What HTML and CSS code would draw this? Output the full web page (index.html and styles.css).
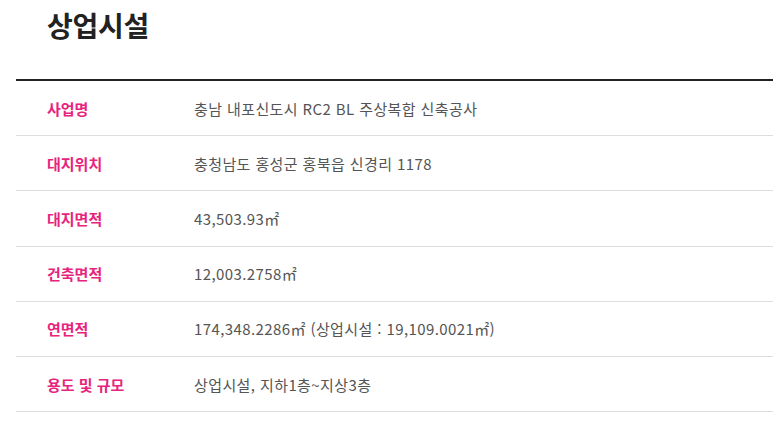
FILE: index.html
```html
<!DOCTYPE HTML>
<html lang="ko">
<head>
<meta charset="UTF-8">
<meta name="viewport" content="width=device-width, initial-scale=1">
<link rel="stylesheet" href="styles.css">
</head>
<body>

<div class="wrapper">
    <h2 class="title">상업시설</h2>

    <!-- 개요 표 -->
    <table class="info-table">
        <tr>
            <th>사업명</th>
            <td>충남 내포신도시 RC2 BL 주상복합 신축공사</td>
        </tr>
        <tr>
            <th>대지위치</th>
            <td>충청남도 홍성군 홍북읍 신경리 1178</td>
        </tr>
        <tr>
            <th>대지면적</th>
            <td>43,503.93㎡</td>
        </tr>
        <tr>
            <th>건축면적</th>
            <td>12,003.2758㎡</td>
        </tr>
        <tr>
            <th>연면적</th>
            <td>174,348.2286㎡ (상업시설 : 19,109.0021㎡)</td>
        </tr>
        <tr>
            <th>용도 및 규모</th>
            <td>상업시설, 지하1층~지상3층</td>
        </tr>
    </table>
</div>

</body>
</html>
```

FILE: styles.css
```css
html, body {
    margin: 0;
    padding: 0;
    font-family: "Noto Sans CJK KR", "Noto Sans", sans-serif;
    background-color: #fff;
}

.wrapper {
    padding-left: 16px;
}

.title {
    margin: 0;
    padding: 4px 0 0 31px;
    height: 81px;
    box-sizing: border-box;
    font-size: 28px;
    line-height: 42px;
    font-weight: 700;
    color: #222;
    letter-spacing: -0.3px;
    border-bottom: 2px solid #222;
}

.info-table {
    width: 100%;
    border-collapse: collapse;
}
.info-table th, .info-table td {
    height: 54.2px;
    padding: 0;
    border-bottom: 1px solid #ddd;
    text-align: left;
    font-size: 15px;
    vertical-align: middle;
}
.info-table th {
    width: 147px;
    padding-left: 31px;
    color: #e6247d;
    font-weight: 700;
}
.info-table td {
    color: #555;
    letter-spacing: 0.4px;
}
```
